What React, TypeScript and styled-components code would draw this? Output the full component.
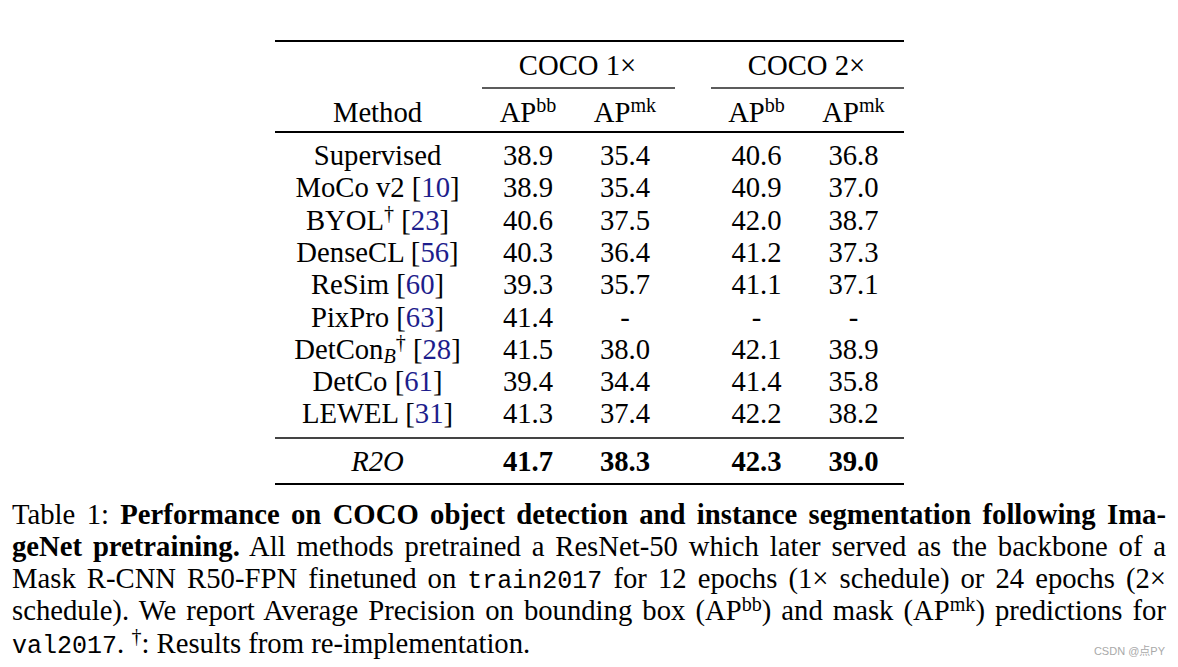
import React from 'react';
import styled, { createGlobalStyle } from 'styled-components';

const GlobalStyle = createGlobalStyle`
  html, body { margin: 0; padding: 0; background: #fff; }
  body {
    width: 1178px;
    height: 667px;
    overflow: hidden;
    font-family: "Liberation Serif", "Times New Roman", serif;
    color: #000;
  }
`;

// column template shared by every table row: method | 1x bb | 1x mk | gap | 2x bb | 2x mk
const COLS = '206px 95px 99px 35px 94px 100px';
const DATA_COLS = [1, 2, 3, 5, 6];

const Page = styled.div`
  position: relative;
  width: 1178px;
  height: 667px;
  box-sizing: border-box;
  padding-top: 40px;
  display: flex;
  flex-direction: column;
  align-items: center;
`;

const Table = styled.div`
  width: 629px;
  display: flex;
  flex-direction: column;
  font-size: 28.7px;
  line-height: 32.3px;
`;

const Rule = styled.div<{ $h: number; $c?: string }>`
  height: ${({ $h }) => $h}px;
  background: ${({ $c }) => $c || '#000'};
`;

const Row = styled.div<{ $pt?: number; $pb?: number }>`
  display: grid;
  grid-template-columns: ${COLS};
  padding-top: ${({ $pt }) => $pt ?? 0}px;
  padding-bottom: ${({ $pb }) => $pb ?? 0}px;
`;

const Body = styled.div<{ $pt: number; $pb: number }>`
  display: flex;
  flex-direction: column;
  padding-top: ${({ $pt }) => $pt}px;
  padding-bottom: ${({ $pb }) => $pb}px;
`;

const Cell = styled.div<{ $col: string | number; $bold?: boolean; $italic?: boolean }>`
  grid-column: ${({ $col }) => $col};
  text-align: center;
  white-space: nowrap;
  font-weight: ${({ $bold }) => ($bold ? 700 : 400)};
  font-style: ${({ $italic }) => ($italic ? 'italic' : 'normal')};
`;

const CmidRow = styled.div`
  display: grid;
  grid-template-columns: ${COLS};
  height: 2px;
`;

const Cmid = styled.div<{ $col: string }>`
  grid-column: ${({ $col }) => $col};
  margin-left: 1px;
  background: #5c5c5c;
`;

const Sup = styled.span`
  font-size: 0.7em;
  position: relative;
  top: -0.48em;
  line-height: 0;
`;

const Sub = styled.span`
  font-size: 0.7em;
  font-style: italic;
  position: relative;
  top: 0.22em;
  line-height: 0;
`;

const Cite = styled.span`
  color: #1d1d8c;
`;

const Caption = styled.div`
  align-self: stretch;
  margin-top: 12.5px;
  padding: 0 12px;
  font-size: 28.7px;
  line-height: 32.3px;
`;

const Line = styled.div<{ $last?: boolean }>`
  height: 32.3px;
  text-align: justify;
  text-align-last: ${({ $last }) => ($last ? 'left' : 'justify')};
`;

const Strong = styled.b`
  font-weight: 700;
`;

const Mono = styled.span`
  font-family: "Liberation Mono", "Courier New", monospace;
  font-size: 25px;
  line-height: 0;
`;

const Watermark = styled.div`
  position: absolute;
  right: 13px;
  bottom: 9px;
  font-family: "Liberation Sans", "Noto Sans CJK SC", sans-serif;
  font-size: 11px;
  color: #a9a9a9;
`;

const ref = (n: string) => (
  <>
    [<Cite>{n}</Cite>]
  </>
);

const AP = ({ k }: { k: string }) => (
  <>
    AP<Sup>{k}</Sup>
  </>
);

const rows: { method: React.ReactNode; vals: string[] }[] = [
  { method: 'Supervised', vals: ['38.9', '35.4', '40.6', '36.8'] },
  { method: <>MoCo v2 {ref('10')}</>, vals: ['38.9', '35.4', '40.9', '37.0'] },
  { method: <>BYOL<Sup>†</Sup> {ref('23')}</>, vals: ['40.6', '37.5', '42.0', '38.7'] },
  { method: <>DenseCL {ref('56')}</>, vals: ['40.3', '36.4', '41.2', '37.3'] },
  { method: <>ReSim {ref('60')}</>, vals: ['39.3', '35.7', '41.1', '37.1'] },
  { method: <>PixPro {ref('63')}</>, vals: ['41.4', '-', '-', '-'] },
  { method: <>DetCon<Sub>B</Sub><Sup>†</Sup> {ref('28')}</>, vals: ['41.5', '38.0', '42.1', '38.9'] },
  { method: <>DetCo {ref('61')}</>, vals: ['39.4', '34.4', '41.4', '35.8'] },
  { method: <>LEWEL {ref('31')}</>, vals: ['41.3', '37.4', '42.2', '38.2'] },
];

const App: React.FC = () => (
  <>
    <GlobalStyle />
    <Page>
      <Table>
        <Rule $h={2} />
        <Row $pt={7} $pb={5.5}>
          <Cell $col="2 / 4">COCO 1×</Cell>
          <Cell $col="5 / 7">COCO 2×</Cell>
        </Row>
        <CmidRow>
          <Cmid $col="2 / 4" />
          <Cmid $col="5 / 7" />
        </CmidRow>
        <Row $pt={7} $pb={3}>
          <Cell $col={1}>Method</Cell>
          <Cell $col={2}><AP k="bb" /></Cell>
          <Cell $col={3}><AP k="mk" /></Cell>
          <Cell $col={5}><AP k="bb" /></Cell>
          <Cell $col={6}><AP k="mk" /></Cell>
        </Row>
        <Rule $h={2} />
        <Body $pt={6} $pb={7}>
          {rows.map((r, i) => (
            <Row key={i}>
              <Cell $col={1}>{r.method}</Cell>
              {r.vals.map((v, j) => (
                <Cell key={j} $col={DATA_COLS[j + 1]}>{v}</Cell>
              ))}
            </Row>
          ))}
        </Body>
        <Rule $h={2} $c="#444" />
        <Row $pt={6.5} $pb={5.5}>
          <Cell $col={1} $italic>R2O</Cell>
          {['41.7', '38.3', '42.3', '39.0'].map((v, j) => (
            <Cell key={j} $col={DATA_COLS[j + 1]} $bold>{v}</Cell>
          ))}
        </Row>
        <Rule $h={2} />
      </Table>

      <Caption>
        <Line>
          Table 1: <Strong>Performance on COCO object detection and instance segmentation following Ima-</Strong>
        </Line>
        <Line>
          <Strong>geNet pretraining.</Strong> All methods pretrained a ResNet-50 which later served as the backbone of a
        </Line>
        <Line>
          Mask R-CNN R50-FPN finetuned on <Mono>train2017</Mono> for 12 epochs (1× schedule) or 24 epochs (2×
        </Line>
        <Line>
          schedule). We report Average Precision on bounding box (<AP k="bb" />) and mask (<AP k="mk" />) predictions for
        </Line>
        <Line $last>
          <Mono>val2017</Mono>. <Sup>†</Sup>: Results from re-implementation.
        </Line>
      </Caption>

      <Watermark>CSDN @点PY</Watermark>
    </Page>
  </>
);

export default App;
